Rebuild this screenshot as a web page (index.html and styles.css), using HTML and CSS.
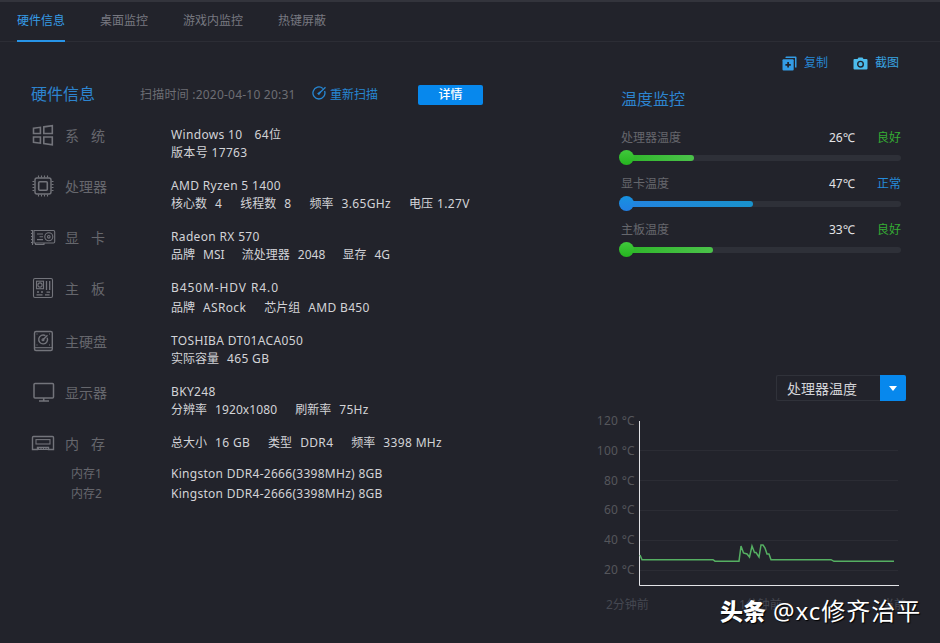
FILE: index.html
```html
<!DOCTYPE html>
<html lang="zh-CN">
<head>
<meta charset="utf-8">
<title>硬件信息</title>
<link rel="stylesheet" href="styles.css">
</head>
<body>
<div class="window">
  <nav class="tabs">
    <a class="tab active">硬件信息</a>
    <a class="tab">桌面监控</a>
    <a class="tab">游戏内监控</a>
    <a class="tab">热键屏蔽</a>
  </nav>
  <main class="content">
    <section class="hardware">
      <header class="scan">
        <h1 class="title">硬件信息</h1>
        <span class="time">扫描时间 :2020-04-10 20:31</span>
        <a class="rescan">
          <svg width="15" height="15" viewBox="0 0 15 15" fill="none" stroke="currentColor" stroke-width="1.3"><path d="M10.8 2.4A6 6 0 1 0 12.6 5"/><path d="M7 7.5 13.5 1.2"/><path d="M5.1 7.4 8.2 5.3 9 6.2 7 9.2Z" fill="currentColor" stroke="none"/></svg>
          重新扫描</a>
        <button class="detail">详情</button>
      </header>

      <div class="row">
        <svg class="icon" viewBox="0 0 26 24"><path d="M3.5 5.3 10.4 4.3V10.5H3.5ZM13.8 3.9 22.3 2.7V10.5H13.8ZM3.5 14H10.4V20.2L3.5 19.2ZM13.8 14H22.3V21.8L13.8 20.6Z" stroke-width="1.6"/></svg>
        <span class="name two"><i>系</i><i>统</i></span>
        <div class="info"><p class="line wide"><span>Windows 10</span><span>64位</span></p><p class="line">版本号 17763</p></div>
      </div>
      <div class="row">
        <svg class="icon" viewBox="0 0 26 24"><rect x="5" y="4" width="16" height="16" rx="2" stroke-width="1.4"/><rect x="8.7" y="7.7" width="8.6" height="8.6" rx="1" stroke-width="1.6"/><path d="M8.5 3.5V1.5M11.5 3.5V1.5M14.5 3.5V1.5M17.5 3.5V1.5M8.5 20.5V22.5M11.5 20.5V22.5M14.5 20.5V22.5M17.5 20.5V22.5M4.5 7.5H2.5M4.5 10.5H2.5M4.5 13.5H2.5M4.5 16.5H2.5M21.5 7.5H23.5M21.5 10.5H23.5M21.5 13.5H23.5M21.5 16.5H23.5"/></svg>
        <span class="name">处理器</span>
        <div class="info"><p class="line">AMD Ryzen 5 1400</p><p class="line"><span class="pair"><b>核心数</b><b>4</b></span><span class="pair"><b>线程数</b><b>8</b></span><span class="pair"><b>频率</b><b>3.65GHz</b></span><span class="pair near"><b>电压</b><b>1.27V</b></span></p></div>
      </div>
      <div class="row">
        <svg class="icon" viewBox="0 0 26 24"><path d="M.8 5.5H2.5V20M1 8.5H2.5M1 11.5H2.5M1 14.5H2.5M1 17.5H2.5M4 5.5H23.5Q24.7 5.5 24.7 7V16.8Q24.7 18 23.5 18H4ZM5.5 18V19.5H14V18"/><circle cx="18.8" cy="11.8" r="4"/><circle cx="18.8" cy="11.8" r="1.3"/><path d="M7 9H13M9.5 11.8H13M7 14.6H13"/></svg>
        <span class="name two"><i>显</i><i>卡</i></span>
        <div class="info"><p class="line">Radeon RX 570</p><p class="line tight"><span class="pair"><b>品牌</b><b>MSI</b></span><span class="pair"><b>流处理器</b><b>2048</b></span><span class="pair"><b>显存</b><b>4G</b></span></p></div>
      </div>
      <div class="row board">
        <svg class="icon" viewBox="0 0 26 24"><rect x="3.5" y="2.5" width="19" height="19" rx="1.5"/><rect x="6.5" y="5.2" width="7" height="7.5"/><circle cx="10" cy="9" r="2.1"/><path d="M16.5 5V14M19.7 5V14M7 16H9M11 16H13M6.5 18.8H12.5M15 18.8H19.5M16.5 16.2H20" stroke-width="1.3"/></svg>
        <span class="name two"><i>主</i><i>板</i></span>
        <div class="info"><p class="line model">B450M-HDV R4.0</p><p class="line"><span class="pair"><b>品牌</b><b>ASRock</b></span><span class="pair"><b>芯片组</b><b>AMD B450</b></span></p></div>
      </div>
      <div class="row">
        <svg class="icon" viewBox="0 0 26 24"><rect x="4.5" y="2.5" width="17.8" height="19" rx="1.5" stroke-width="1.4"/><path d="M5 18.7H22"/><path d="M15.4 6.7A4.4 4.4 0 1 0 17.2 8.8M13 10.7 17.5 6.2" stroke-width="1.4"/><circle cx="13" cy="10.7" r="1"/><path d="M6.5 5H7.5M19 5H20M6.5 16H7.5M19 16H20"/></svg>
        <span class="name">主硬盘</span>
        <div class="info"><p class="line">TOSHIBA DT01ACA050</p><p class="line"><span class="pair"><b>实际容量</b><b>465 GB</b></span></p></div>
      </div>
      <div class="row">
        <svg class="icon" viewBox="0 0 26 24"><rect x="4" y="3.6" width="19.5" height="14.5" rx="1" stroke-width="1.5"/><path d="M13.7 18V20.5M9 21H19" stroke-width="1.6"/></svg>
        <span class="name">显示器</span>
        <div class="info"><p class="line">BKY248</p><p class="line"><span class="pair"><b>分辨率</b><b class="res">1920x1080</b></span><span class="pair"><b>刷新率</b><b>75Hz</b></span></p></div>
      </div>
      <div class="row memory">
        <svg class="icon" viewBox="0 0 26 24"><path d="M3.5 5.5H22.5Q23.5 5.5 23.5 6.5V18.5H18.5V16.5H7.5V18.5H2.5V6.5Q2.5 5.5 3.5 5.5Z" stroke-width="1.4"/><rect x="6" y="8.6" width="14" height="4.4"/><path d="M8.5 16V18.5M11 16V18.5M13.5 16V18.5M16 16V18.5M7.5 18.5H18.5"/></svg>
        <span class="name two"><i>内</i><i>存</i></span>
        <div class="info"><p class="line"><span class="pair"><b>总大小</b><b>16 GB</b></span><span class="pair"><b>类型</b><b>DDR4</b></span><span class="pair"><b>频率</b><b>3398 MHz</b></span></p></div>
      </div>
      <div class="stick"><span>内存1</span><p>Kingston DDR4-2666(3398MHz) 8GB</p></div>
      <div class="stick"><span>内存2</span><p>Kingston DDR4-2666(3398MHz) 8GB</p></div>
    </section>

    <aside class="monitor">
      <div class="actions">
        <a class="copy"><svg width="15" height="15" viewBox="0 0 15 15"><path d="M3.5 1.2Q3.5 .5 4.3 .5H13.5Q14.5 .5 14.5 1.5V11.5H13V2H3.5Z" fill="#339ce5"/><rect x=".5" y="3.2" width="11.2" height="11.2" rx="1" fill="#339ce5"/><path d="M6.1 6V11.5M3.4 8.8H8.8" stroke="#20232c" stroke-width="1.7"/></svg>复制</a>
        <a class="shot"><svg width="15" height="15" viewBox="0 0 15 15"><path d="M4.5 3 5.5 1.5H9.5L10.5 3H13.5Q14.5 3 14.5 4V12.5Q14.5 13.5 13.5 13.5H1.5Q.5 13.5 .5 12.5V4Q.5 3 1.5 3Z" fill="#4cbcec"/><circle cx="7.5" cy="8.2" r="2.8" fill="none" stroke="#20232c" stroke-width="1.4"/></svg>截图</a>
      </div>
      <h2 class="title">温度监控</h2>
      <div class="temps">
        <div class="temp good">
          <div class="reading"><span class="part">处理器温度</span><span class="value">26℃</span><span class="state">良好</span></div>
          <div class="track"><div class="fill" style="width:73px"></div></div>
        </div>
        <div class="temp normal">
          <div class="reading"><span class="part">显卡温度</span><span class="value">47℃</span><span class="state">正常</span></div>
          <div class="track"><div class="fill" style="width:132px"></div></div>
        </div>
        <div class="temp good">
          <div class="reading"><span class="part">主板温度</span><span class="value">33℃</span><span class="state">良好</span></div>
          <div class="track"><div class="fill" style="width:92px"></div></div>
        </div>
      </div>
      <div class="select"><span>处理器温度</span><i class="arrow"></i></div>
      <svg class="chart" width="330" height="210" viewBox="590 410 330 210">
        <g class="ylabels"><text x="635" y="425">120 °C</text><text x="635" y="455">100 °C</text><text x="635" y="485">80 °C</text><text x="635" y="514">60 °C</text><text x="635" y="544">40 °C</text><text x="635" y="574">20 °C</text></g>
        <path class="grid" d="M640 450.5H898M640 480.5H898M640 510.5H898M640 540.5H898M640 570.5H898"/>
        <path class="axis" d="M639.5 421V585.5H899"/>
        <path class="plot" d="M640 555 642 559.7H713L715 561.2H739L741 546 743.5 553 747 554 749.5 557 752 546 754.5 552.5 756 552.5 759 557 761 545H763L765 548 767 554 769 554 771 559.7H831L834 561.3H894"/>
        <g class="xlabels"><text x="606" y="609">2分钟前</text><text x="739" y="609">1分钟前</text><text x="882" y="609">当前</text></g>
      </svg>
    </aside>
  </main>
  <div class="watermark"><strong>头条</strong><span>@xc修齐治平</span></div>
</div>
</body>
</html>
```
FILE: styles.css
```css
* { box-sizing: border-box; margin: 0; padding: 0; }
body { background: #22232b; font-family: "Noto Sans", "Noto Sans CJK SC", sans-serif; font-size: 12px; color: #d2d3d7; }
i, b { font-style: normal; font-weight: normal; }
.window { position: relative; width: 940px; height: 643px; overflow: hidden; }
.tabs { display: flex; gap: 35px; height: 42px; padding-left: 17px; border-top: 2px solid #33343c; border-bottom: 1px solid #2c2d35; }
.tab { height: 40px; line-height: 37px; color: #777880; white-space: nowrap; }
.tab.active { color: #369be6; border-bottom: 2px solid #2794e8; }
.content { display: flex; height: 601px; }
.hardware { width: 590px; padding-left: 31px; }
.scan { display: flex; align-items: center; height: 22px; margin-top: 41px; margin-bottom: 20px; white-space: nowrap; }
.title { font-size: 16px; font-weight: normal; line-height: 22px; color: #2d84cf; }
.time { margin-left: 45px; width: 157px; letter-spacing: .22px; color: #6d6e74; }
.rescan { display: flex; align-items: center; gap: 3px; margin-left: 15px; margin-top: -1px; color: #2787d3; }
.rescan svg { display: block; }
.detail { width: 65px; height: 20px; margin-left: 40px; margin-top: 1px; border: 0; border-radius: 2px; background: #0788ed; color: #fff; font: 500 12px/20px "Noto Sans", "Noto Sans CJK SC", sans-serif; }
.row { display: flex; height: 51px; align-items: flex-start; }
.row.board { height: 53px; }
.row.memory { height: 30px; }
.icon { width: 26px; height: 24px; margin: -2px 0 0 -1px; fill: none; stroke: #73747b; stroke-width: 1.1; }
.name { display: flex; justify-content: space-between; width: 42px; margin: 1px 63px 0 9px; font-size: 14px; line-height: 20px; color: #66676d; white-space: nowrap; }
.name.two { width: 40px; margin-right: 65px; }
.info { padding: 1px 0 0 1px; }
.line { display: flex; gap: 18px; height: 18px; line-height: 18px; letter-spacing: .34px; white-space: nowrap; }
.line b { letter-spacing: 0; }
.line b + b { letter-spacing: .34px; }
.line b.res { letter-spacing: .1px; }
.line.wide { gap: 12px; }
.line.tight { gap: 17px; }
.line.tight b + b { letter-spacing: .05px; }
.line.model { letter-spacing: .9px; }
.board .line { height: 20px; line-height: 18px; }
.pair { display: flex; gap: 8px; }
.pair.near { gap: 4px; }
.stick { display: flex; height: 20px; line-height: 22px; padding-left: 40px; white-space: nowrap; }
.stick span { width: 100px; color: #66676d; }
.stick p { letter-spacing: .28px; }
.monitor { width: 350px; padding-left: 31px; }
.actions { display: flex; justify-content: flex-end; gap: 25px; height: 18px; margin-top: 12px; padding-right: 41px; line-height: 20px; }
.actions a { display: flex; align-items: center; gap: 7px; color: #2787d3; }
.actions .shot { color: #38a3e2; }
.monitor .title { margin-top: 16px; }
.temps { margin-top: 18px; width: 280px; }
.temp { height: 46px; }
.reading { display: flex; height: 18px; line-height: 20px; }
.part { flex: 1; color: #66676d; }
.value { width: 48px; color: #e4e4e7; }
.state { width: 24px; }
.good .state { color: #35ad34; }
.normal .state { color: #258bdb; }
.track { height: 6px; margin-top: 9px; border-radius: 3px; background: #2e3038; }
.fill { position: relative; height: 6px; border-radius: 3px; }
.fill::before { content: ""; position: absolute; left: -2px; top: -5px; width: 15px; height: 15px; border-radius: 50%; }
.good .fill { background: linear-gradient(90deg, #2db528, #4bc24a); }
.good .fill::before { background: linear-gradient(#40c93c, #25b41f); }
.normal .fill { background: linear-gradient(90deg, #2382e0, #1992cc); }
.normal .fill::before { background: linear-gradient(#1792e0, #217fe3); }
.select { display: flex; justify-content: space-between; width: 130px; height: 26px; margin: 109px 0 0 155px; border: 1px solid #30323a; border-right: 0; border-radius: 2px; font-size: 14px; line-height: 25px; }
.select span { padding-left: 10px; }
.arrow { display: flex; align-items: center; justify-content: center; width: 26px; height: 26px; margin-top: -1px; border-radius: 0 2px 2px 0; background: #0788ed; }
.arrow::before { content: ""; border: 4px solid transparent; border-top: 5px solid #fff; border-bottom: 0; }
.chart { display: block; margin: 9px 0 0 -31px; }
.ylabels { fill: #55565b; text-anchor: end; font-size: 12px; letter-spacing: .3px; }
.xlabels { fill: #454851; font-size: 12px; }
.grid { stroke: #2b2c34; fill: none; }
.axis { stroke: #e3e4e8; fill: none; }
.plot { stroke: #55af62; stroke-width: 1.5; fill: none; }
.watermark { position: absolute; left: 720px; top: 593px; display: flex; gap: 7px; font-size: 23px; line-height: 36px; color: #fff; white-space: nowrap; text-shadow: 1px 1px 1px #000; }
.watermark strong { font-weight: 900; }
.watermark span { font-size: 24px; letter-spacing: 1px; }
```
